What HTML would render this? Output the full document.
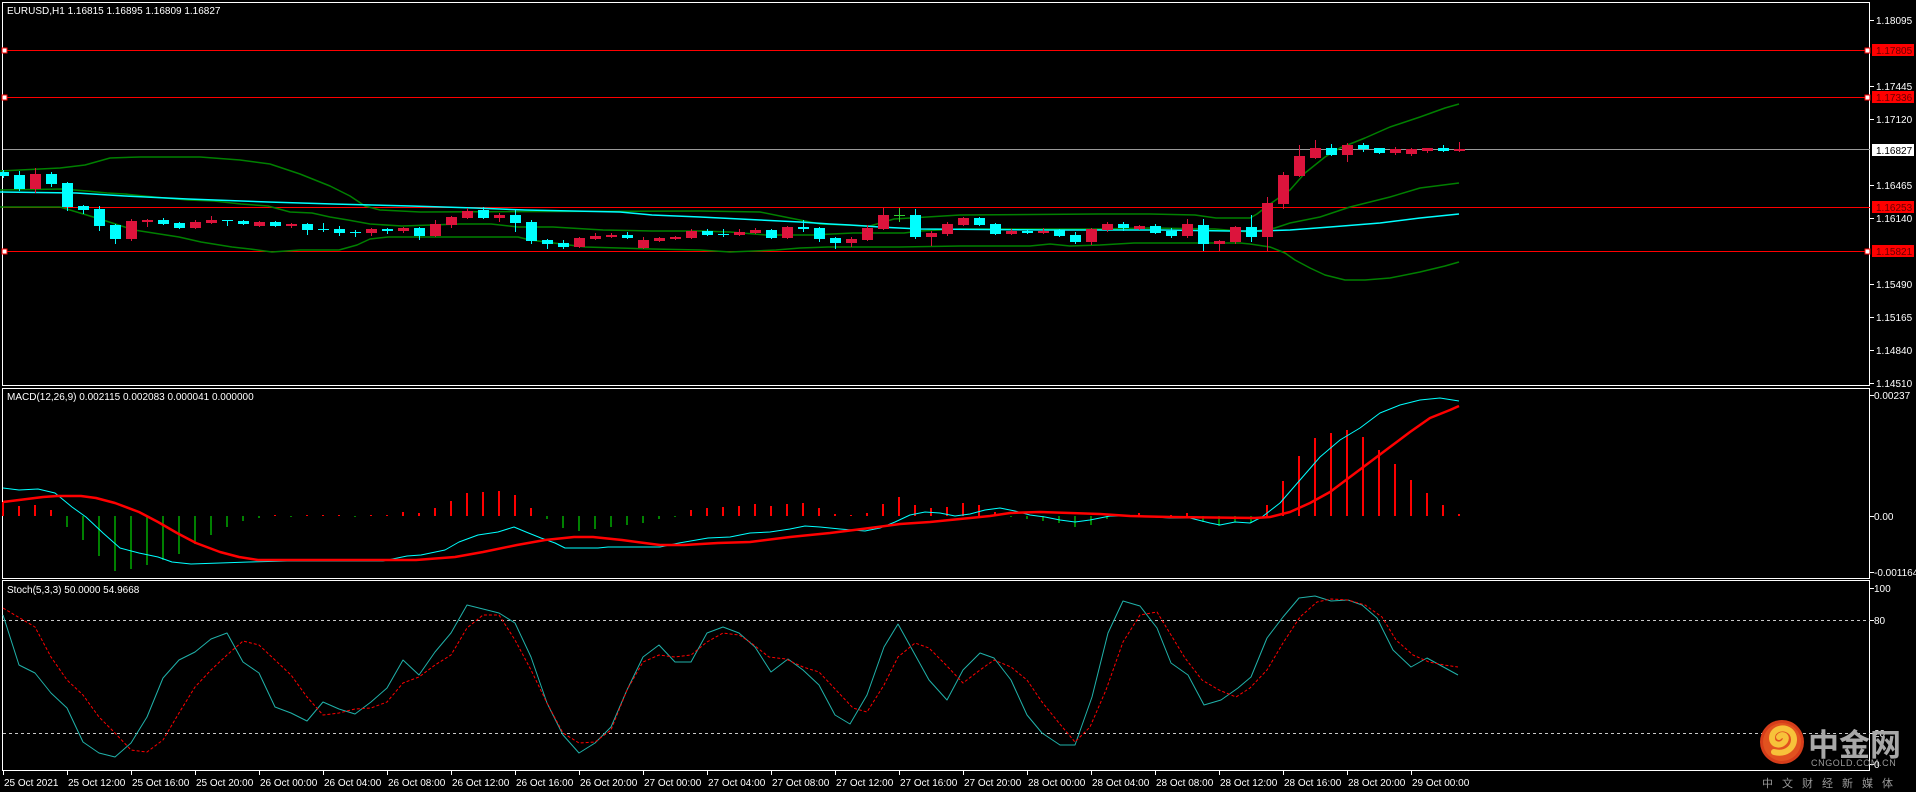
<!DOCTYPE html>
<html><head><meta charset="utf-8">
<style>
html,body{margin:0;padding:0;background:#000;width:1916px;height:792px;overflow:hidden}
svg{position:absolute;left:0;top:0}
text{font-family:"Liberation Sans",sans-serif;font-size:10px;fill:#fff}
</style></head><body>
<svg id="s" width="1916" height="792" viewBox="0 0 1916 792" xmlns="http://www.w3.org/2000/svg">
<rect width="1916" height="792" fill="#000"/>
<g fill="none" stroke="#fff" stroke-width="1">
<rect x="2.5" y="2.5" width="1867" height="383"/>
<rect x="2.5" y="388.5" width="1867" height="190"/>
<rect x="2.5" y="580.5" width="1867" height="190"/>
</g>
<g id="g"></g>
<text x="7" y="14">EURUSD,H1  1.16815 1.16895 1.16809 1.16827</text>
<text x="7" y="400">MACD(12,26,9) 0.002115 0.002083 0.000041 0.000000</text>
<text x="7" y="593">Stoch(5,3,3) 50.0000 54.9668</text>
<g id="ax">
<text x="1876" y="24">1.18095</text>
<text x="1876" y="90">1.17445</text>
<text x="1876" y="123">1.17120</text>
<text x="1876" y="189">1.16465</text>
<text x="1876" y="222">1.16140</text>
<text x="1876" y="288">1.15490</text>
<text x="1876" y="321">1.15165</text>
<text x="1876" y="354">1.14840</text>
<text x="1876" y="387">1.14510</text>
<text x="1874" y="399">0.00237</text>
<text x="1874" y="520">0.00</text>
<text x="1874" y="576">-0.001164</text>
<text x="1874" y="592">100</text>
<text x="1874" y="624">80</text>
<text x="1874" y="737">20</text>
<text x="1874" y="768">0</text>
</g>
<rect x="1872" y="44" width="42" height="12" fill="#f00"/><text x="1876" y="54" style="fill:#600">1.17805</text>
<rect x="1872" y="91" width="42" height="12" fill="#f00"/><text x="1876" y="101" style="fill:#600">1.17336</text>
<rect x="1872" y="144" width="42" height="12" fill="#fff"/><text x="1876" y="154" style="fill:#000">1.16827</text>
<rect x="1872" y="201" width="42" height="12" fill="#f00"/><text x="1876" y="211" style="fill:#600">1.16253</text>
<rect x="1872" y="245" width="42" height="12" fill="#f00"/><text x="1876" y="255" style="fill:#600">1.15821</text>
<g id="tl"></g>
<circle cx="1782" cy="742" r="22" fill="#d63d1a"/>
<circle cx="1782" cy="742" r="19" fill="#e2521f"/>
<path d="M1774 752 C1790 756 1798 742 1792 733 C1786 725 1772 728 1772 738 C1772 745 1781 747 1785 741 C1788 736 1782 733 1779 737" fill="none" stroke="#f7c23a" stroke-width="6" stroke-linecap="round"/>
<text x="1808" y="756" style="font-family:'Noto Sans CJK SC',sans-serif;font-size:31px;font-weight:bold;fill:#a8a8a8">中金网</text>
<text x="1811" y="766" style="font-size:9px;fill:#9a9a9a;letter-spacing:0.6px">CNGOLD.COM.CN</text>
<text x="1762" y="787" style="font-family:'Noto Sans CJK SC',sans-serif;font-size:11px;fill:#9a9a9a;letter-spacing:9px">中文财经新媒体</text>
</svg>
<script>
var g=document.getElementById('g'),h='';
function line(x1,y1,x2,y2,c,w,d){h+='<line x1="'+x1+'" y1="'+y1+'" x2="'+x2+'" y2="'+y2+'" stroke="'+c+'" stroke-width="'+(w||1)+'"'+(d?' stroke-dasharray="'+d+'"':'')+'/>';}
function pl(p,c,w,d){var s=[];for(var i=0;i<p.length;i+=2)s.push(p[i]+','+p[i+1]);h+='<polyline points="'+s.join(' ')+'" fill="none" stroke="'+c+'" stroke-width="'+(w||1)+'"'+(d?' stroke-dasharray="'+d+'"':'')+' stroke-linejoin="round"/>';}
[50,97,207,251].forEach(function(y){line(3,y+.5,1870,y+.5,'#f00',1);});
line(3,149.5,1870,149.5,'#9a9a9a',1);
[50,97,251].forEach(function(y){h+='<rect x="2" y="'+(y-2)+'" width="5" height="5" fill="#fff" stroke="#f00" stroke-width="1"/><rect x="1865" y="'+(y-2)+'" width="5" height="5" fill="#fff" stroke="#f00" stroke-width="1"/>';});
pl([0,171,60,168,85,165,110,158,140,157,200,157,240,160,270,164,300,174,330,186,350,196,365,206,380,210,420,212,700,211,760,212,790,218,820,224,870,226,894,219,960,215,1098,214,1150,214,1195,215,1216,218,1250,218,1257,214,1270,204,1290,190,1305,173,1325,157,1340,148,1365,138,1390,127,1420,117,1445,108,1459,104],'#008000',1.5);
pl([0,190,62,189,87,191,107,193,125,194,154,197,188,200,214,201,241,204,268,206,290,212,312,213,330,217,348,220,370,224,402,226,460,224,491,224,518,227,553,227,603,230,652,231,700,231,730,232,766,235,812,235,853,233,904,233,920,231,960,229,1098,229,1150,228,1215,229,1250,232,1275,228,1290,223,1320,217,1350,207,1390,197,1420,188,1459,183],'#008000',1.5);
pl([0,207,60,207,80,213,103,220,134,230,179,237,201,242,232,247,250,249,272,252,300,250,339,250,357,245,370,239,388,237,518,237,530,240,585,247,652,249,700,250,730,252,776,250,800,248,828,247,900,247,960,246,1030,246,1050,244,1070,246,1100,245,1134,243,1240,243,1250,244,1270,247,1285,253,1295,260,1310,268,1325,275,1345,280,1365,280,1390,278,1420,272,1445,266,1459,262],'#008000',1.5);
pl([0,192,76,193,125,196,188,199,268,202,333,204,411,206,475,208,525,210,620,212,652,215,700,217,760,220,800,222,830,224,850,225,880,227,920,229,1050,230,1160,230,1230,231,1260,231,1290,230,1330,227,1380,223,1420,218,1459,214],'#00ffff',1.5);
var C=[[172,176,170,178,'c'],[175,189,171,191,'c'],[174,189,168,193,'r'],[174,184,172,187,'c'],[183,207,182,211,'c'],[206,210,205,214,'c'],[209,226,206,231,'c'],[225,239,224,244,'c'],[221,239,219,241,'r'],[220,222,219,227,'r'],[220,224,218,225,'c'],[223,228,222,229,'c'],[222,228,220,229,'r'],[220,223,216,224,'r'],[220,221,220,226,'c'],[221,224,220,225,'c'],[222,226,221,227,'r'],[222,226,221,227,'c'],[224,226,223,228,'r'],[224,230,223,235,'c'],[229,230,223,232,'c'],[229,233,226,236,'c'],[232,233,230,237,'c'],[229,233,228,236,'r'],[229,231,228,234,'c'],[228,231,227,233,'r'],[228,236,227,240,'c'],[224,236,220,237,'r'],[217,225,216,228,'r'],[211,218,208,219,'r'],[210,218,207,219,'c'],[215,218,213,222,'r'],[215,223,210,232,'c'],[222,241,220,244,'c'],[240,244,239,249,'c'],[243,247,240,249,'c'],[238,247,237,248,'r'],[236,239,233,240,'r'],[235,237,233,238,'r'],[235,238,232,239,'c'],[240,248,237,249,'r'],[238,241,237,242,'r'],[237,239,236,240,'r'],[231,238,229,239,'r'],[231,235,229,236,'c'],[234,235,229,237,'c'],[232,235,229,236,'r'],[230,233,228,234,'r'],[230,238,229,239,'c'],[227,238,226,239,'r'],[227,229,220,232,'c'],[228,239,227,242,'c'],[238,243,237,249,'c'],[239,243,237,247,'r'],[228,240,225,241,'r'],[215,229,208,230,'r'],[215,216,208,222,'g'],[215,237,209,239,'c'],[233,237,231,246,'r'],[224,234,222,236,'r'],[218,225,217,226,'r'],[218,225,217,226,'c'],[224,234,223,235,'c'],[231,234,229,235,'r'],[231,233,230,234,'c'],[231,233,228,234,'r'],[230,236,229,237,'c'],[235,242,232,244,'c'],[229,242,228,245,'r'],[224,230,222,232,'r'],[224,228,222,231,'c'],[226,229,225,230,'r'],[226,233,224,234,'c'],[231,236,228,238,'c'],[224,236,219,238,'r'],[225,244,219,251,'c'],[241,244,240,251,'r'],[227,242,226,244,'r'],[227,237,215,242,'c'],[203,237,197,251,'r'],[175,204,172,209,'r'],[156,176,145,177,'r'],[148,158,140,159,'r'],[148,155,144,156,'c'],[145,155,143,162,'r'],[145,149,143,152,'c'],[148,153,148,154,'c'],[149,153,147,155,'r'],[149,154,148,156,'r'],[148,151,148,153,'r'],[148,151,145,152,'c'],[149,151,142,152,'r']];
C.forEach(function(c,n){var x=3+16*n,col=c[4]=='r'?'#dc143c':(c[4]=='g'?'#32cd32':'#00ffff');
 line(x+.5,c[2],x+.5,c[3],col,1);
 var ht=Math.max(1,c[1]-c[0]);
 h+='<rect x="'+(x-5)+'" y="'+c[0]+'" width="11" height="'+ht+'" fill="'+col+'"/>';});
var HB=[[3,502],[19,506],[35,505],[51,510],[67,527],[83,540],[99,556],[115,571],[131,569],[147,565],[163,560],[179,554],[195,544],[211,535],[227,527],[243,521],[259,518],[275,515],[291,517],[307,515],[323,515],[339,515],[355,517],[371,515],[387,515],[403,512],[419,513],[435,508],[451,501],[467,493],[483,492],[499,491],[515,495],[531,508],[547,519],[563,528],[579,531],[595,529],[611,527],[627,525],[643,523],[659,519],[675,517],[691,510],[707,508],[723,507],[739,506],[755,504],[771,506],[787,504],[803,503],[819,508],[835,514],[851,515],[867,513],[883,504],[899,497],[915,505],[931,508],[947,507],[963,503],[979,505],[995,512],[1011,517],[1027,519],[1043,521],[1059,523],[1075,527],[1091,525],[1107,519],[1123,515],[1139,513],[1155,517],[1171,515],[1187,513],[1203,522],[1219,526],[1235,522],[1251,523],[1267,505],[1283,481],[1299,456],[1315,438],[1331,433],[1347,430],[1363,437],[1379,450],[1395,464],[1411,480],[1427,493],[1443,505],[1459,514]];
HB.forEach(function(b){var y=b[1],col=y<516?'#f00':'#008000';if(Math.abs(y-516)<1)return;h+='<rect x="'+(b[0]-1)+'" y="'+Math.min(y,516)+'" width="2" height="'+Math.abs(y-516)+'" fill="'+col+'"/>';});
pl([3,488,19,490,38,489,55,493,72,507,86,517,103,533,120,548,139,553,158,557,172,562,191,564,220,563,249,562,287,561,383,561,407,556,421,555,445,550,459,542,478,535,498,532,514,527,526,532,541,538,555,543,565,548,598,548,608,547,660,547,679,543,708,538,730,537,750,533,770,532,790,529,805,526,820,527,840,529,865,531,880,528,895,522,910,515,925,512,940,513,955,516,970,514,985,510,1000,508,1015,511,1030,515,1045,517,1060,520,1075,522,1090,520,1110,516,1140,516,1170,518,1190,518,1210,523,1220,525,1235,522,1250,523,1262,517,1280,503,1300,480,1320,457,1340,440,1360,428,1380,413,1400,405,1420,400,1440,398,1459,401],'#00ffff',1);
pl([3,502,19,500,43,497,57,496,81,496,96,498,115,503,139,512,158,522,177,533,196,543,220,552,239,557,258,560,416,560,455,557,483,552,517,545,545,540,574,537,593,537,622,540,660,545,684,545,718,543,750,542,790,537,830,533,870,528,900,524,930,522,960,519,990,516,1010,513,1040,512,1070,513,1100,514,1130,516,1170,517,1255,518,1270,517,1290,512,1310,503,1330,492,1350,477,1370,462,1390,447,1410,432,1430,418,1450,410,1459,406],'#f00',2.5);
line(3,620.5,1870,620.5,'#c8c8c8',1,'3,3');
line(3,733.5,1870,733.5,'#c8c8c8',1,'3,3');
pl([3,615,19,665,35,673,51,693,67,708,83,742,99,753,115,757,131,743,147,717,163,678,179,660,195,652,211,639,227,633,243,662,259,673,275,707,291,713,307,721,323,702,339,709,355,714,371,702,387,688,403,660,419,675,435,652,451,633,467,605,483,609,499,613,515,623,531,657,547,703,563,735,579,753,595,743,611,727,627,690,643,657,659,645,675,662,691,662,707,633,723,627,739,633,755,647,771,672,788,659,803,670,819,685,835,715,850,724,867,695,884,647,898,624,929,680,947,700,963,670,980,653,994,658,1011,680,1027,715,1042,733,1060,745,1075,745,1092,697,1108,633,1123,601,1140,606,1157,628,1171,663,1188,675,1204,705,1221,700,1238,688,1251,677,1267,638,1283,617,1299,598,1315,596,1331,601,1348,600,1362,605,1377,618,1393,650,1411,667,1427,658,1458,675],'#20b2aa',1);
pl([3,608,35,627,51,657,67,680,83,695,99,717,115,733,131,750,147,752,163,740,179,713,195,687,211,670,227,655,243,641,259,645,275,660,291,675,307,697,323,715,339,713,355,709,371,708,387,702,403,683,419,677,435,665,451,655,467,628,483,615,499,615,515,640,531,670,547,703,563,733,579,743,595,742,611,730,627,690,643,662,659,655,675,657,691,655,707,642,723,633,739,635,750,642,769,657,786,659,803,667,819,672,836,690,853,708,867,712,884,685,898,657,915,643,929,648,946,665,963,683,980,670,994,660,1011,667,1027,680,1042,702,1059,723,1075,742,1090,727,1106,690,1123,642,1140,615,1157,612,1171,635,1185,658,1202,680,1219,690,1236,697,1250,688,1267,670,1283,643,1300,617,1317,602,1331,599,1348,600,1365,605,1382,617,1396,640,1413,655,1429,662,1444,665,1458,667],'#f00',1,'3,2');
[20,86,119,185,218,284,317,350,383,395,516,572,588,620,733,764].forEach(function(y){line(1870,y+.5,1874,y+.5,'#fff',1);});
g.innerHTML=h;
var L=['25 Oct 2021','25 Oct 12:00','25 Oct 16:00','25 Oct 20:00','26 Oct 00:00','26 Oct 04:00','26 Oct 08:00','26 Oct 12:00','26 Oct 16:00','26 Oct 20:00','27 Oct 00:00','27 Oct 04:00','27 Oct 08:00','27 Oct 12:00','27 Oct 16:00','27 Oct 20:00','28 Oct 00:00','28 Oct 04:00','28 Oct 08:00','28 Oct 12:00','28 Oct 16:00','28 Oct 20:00','29 Oct 00:00'];
var t='';L.forEach(function(s,i){var x=3+64*i;t+='<line x1="'+(x+.5)+'" y1="771" x2="'+(x+.5)+'" y2="775" stroke="#fff"/><text x="'+(x+1)+'" y="786">'+s+'</text>';});
document.getElementById('tl').innerHTML=t;
</script>
</body></html>
